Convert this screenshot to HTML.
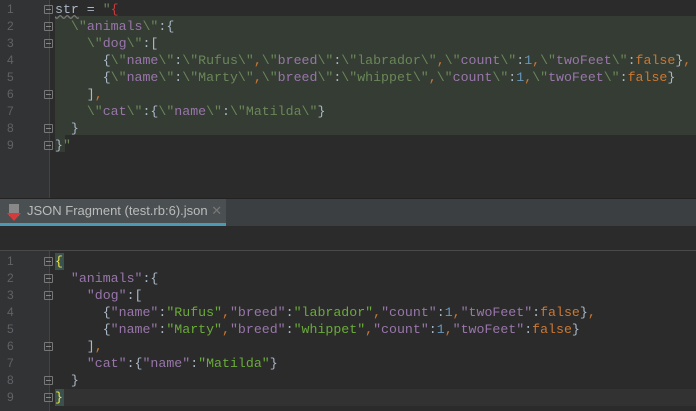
<!DOCTYPE html>
<html><head><style>
body{margin:0;width:696px;height:411px;background:#2b2b2b;overflow:hidden;position:relative;font-family:"Liberation Mono",monospace;font-size:13.25px}
.g{position:absolute;left:0;width:49px;background:#313335}
.sep{position:absolute;left:49px;width:1px;background:#444}
.ln{position:absolute;left:0;width:30px;text-align:left;padding-left:7px;color:#606366;font-size:12px;height:17px;line-height:17px;font-family:"Liberation Sans",sans-serif}
.c{position:absolute;left:55px;white-space:pre;height:17px;line-height:17px;color:#a9b7c6}
.k{color:#9876aa}.s{color:#6a8759}.js{color:#6aab3a}.n{color:#6897bb}.o{color:#cc7832}.q{color:#cc7832}
.f{position:absolute;left:44px;width:9px;height:9px;border:1px solid #777;box-sizing:border-box;border-radius:1px}
.f:after{content:"";position:absolute;left:1px;top:3px;width:5px;height:1px;background:#888}
</style></head><body>
<div class="g" style="top:0;height:198px"></div>
<div class="sep" style="top:0;height:198px"></div>
<div style="position:absolute;left:55px;top:16px;width:641px;height:119px;background:#353c33"></div>
<div style="position:absolute;left:55px;top:135px;width:10px;height:17px;background:#353c33"></div>

<div class="ln" style="top:1px">1</div><div class="ln" style="top:18px">2</div><div class="ln" style="top:35px">3</div><div class="ln" style="top:52px">4</div><div class="ln" style="top:69px">5</div><div class="ln" style="top:86px">6</div><div class="ln" style="top:103px">7</div><div class="ln" style="top:120px">8</div><div class="ln" style="top:137px">9</div>
<div class="f" style="top:5px"></div><div class="f" style="top:22px"></div><div class="f" style="top:39px"></div><div class="f" style="top:90px"></div><div class="f" style="top:124px"></div><div class="f" style="top:141px"></div>

<div class="c" style="top:1px"><span style="color:#a9b7c6;text-decoration:underline wavy #777">str</span> = <span class="s">"</span><span style="color:#c93b3b">{</span></div>
<div class="c" style="top:18px">  <span class="s">\"</span><span class="k">animals</span><span class="s">\"</span>:{</div>
<div class="c" style="top:35px">    <span class="s">\"</span><span class="k">dog</span><span class="s">\"</span>:[</div>
<div class="c" style="top:52px">      {<span class="s">\"</span><span class="k">name</span><span class="s">\"</span>:<span class="s">\"Rufus\"</span><span class="o">,</span><span class="s">\"</span><span class="k">breed</span><span class="s">\"</span>:<span class="s">\"labrador\"</span><span class="o">,</span><span class="s">\"</span><span class="k">count</span><span class="s">\"</span>:<span class="n">1</span><span class="o">,</span><span class="s">\"</span><span class="k">twoFeet</span><span class="s">\"</span>:<span class="o">false</span>}<span class="o">,</span></div>
<div class="c" style="top:69px">      {<span class="s">\"</span><span class="k">name</span><span class="s">\"</span>:<span class="s">\"Marty\"</span><span class="o">,</span><span class="s">\"</span><span class="k">breed</span><span class="s">\"</span>:<span class="s">\"whippet\"</span><span class="o">,</span><span class="s">\"</span><span class="k">count</span><span class="s">\"</span>:<span class="n">1</span><span class="o">,</span><span class="s">\"</span><span class="k">twoFeet</span><span class="s">\"</span>:<span class="o">false</span>}</div>
<div class="c" style="top:86px">    ]<span class="o">,</span></div>
<div class="c" style="top:103px">    <span class="s">\"</span><span class="k">cat</span><span class="s">\"</span>:{<span class="s">\"</span><span class="k">name</span><span class="s">\"</span>:<span class="s">\"Matilda\"</span>}</div>
<div class="c" style="top:120px">  }</div>
<div class="c" style="top:137px">}<span class="s">"</span></div>

<div style="position:absolute;left:0;top:198px;width:696px;height:1px;background:#222"></div>
<div style="position:absolute;left:0;top:199px;width:696px;height:27px;background:#3c3f41"></div>
<div style="position:absolute;left:0;top:199px;width:226px;height:24px;background:#4a4f52"></div>
<div style="position:absolute;left:0;top:223px;width:226px;height:3px;background:#4a9ab5"></div>
<div style="position:absolute;left:9px;top:204px;width:10px;height:12px;background:#888"></div>
<div style="position:absolute;left:7px;top:213px;width:0;height:0;border-left:7px solid transparent;border-right:7px solid transparent;border-top:8px solid #d43b3b"></div>
<div style="position:absolute;left:27px;top:201px;height:20px;line-height:20px;color:#bbbbbb;font-family:'Liberation Sans',sans-serif;font-size:13px;white-space:pre">JSON Fragment (test.rb:6).json <span style="color:#777">✕</span></div>
<div style="position:absolute;left:0;top:250px;width:696px;height:1px;background:#4a4a4a"></div>

<div class="g" style="top:251px;height:160px"></div>
<div class="sep" style="top:251px;height:160px"></div>
<div style="position:absolute;left:55px;top:389px;width:641px;height:17px;background:#323232"></div>
<div style="position:absolute;left:55px;top:253px;width:9px;height:17px;background:#3b514d"></div>
<div style="position:absolute;left:55px;top:389px;width:9px;height:17px;background:#3b514d"></div>

<div class="ln" style="top:253px">1</div><div class="ln" style="top:270px">2</div><div class="ln" style="top:287px">3</div><div class="ln" style="top:304px">4</div><div class="ln" style="top:321px">5</div><div class="ln" style="top:338px">6</div><div class="ln" style="top:355px">7</div><div class="ln" style="top:372px">8</div><div class="ln" style="top:389px">9</div>
<div class="f" style="top:257px"></div><div class="f" style="top:274px"></div><div class="f" style="top:291px"></div><div class="f" style="top:342px"></div><div class="f" style="top:376px"></div><div class="f" style="top:393px"></div>

<div class="c" style="top:253px"><span style="color:#e8e34a">{</span></div>
<div class="c" style="top:270px">  <span class="k">"animals"</span>:{</div>
<div class="c" style="top:287px">    <span class="k">"dog"</span>:[</div>
<div class="c" style="top:304px">      {<span class="k">"name"</span>:<span class="js">"Rufus"</span><span class="o">,</span><span class="k">"breed"</span>:<span class="js">"labrador"</span><span class="o">,</span><span class="k">"count"</span>:<span class="n">1</span><span class="o">,</span><span class="k">"twoFeet"</span>:<span class="o">false</span>}<span class="o">,</span></div>
<div class="c" style="top:321px">      {<span class="k">"name"</span>:<span class="js">"Marty"</span><span class="o">,</span><span class="k">"breed"</span>:<span class="js">"whippet"</span><span class="o">,</span><span class="k">"count"</span>:<span class="n">1</span><span class="o">,</span><span class="k">"twoFeet"</span>:<span class="o">false</span>}</div>
<div class="c" style="top:338px">    ]<span class="o">,</span></div>
<div class="c" style="top:355px">    <span class="k">"cat"</span>:{<span class="k">"name"</span>:<span class="js">"Matilda"</span>}</div>
<div class="c" style="top:372px">  }</div>
<div class="c" style="top:389px"><span style="color:#e8e34a">}</span></div>
</body></html>
